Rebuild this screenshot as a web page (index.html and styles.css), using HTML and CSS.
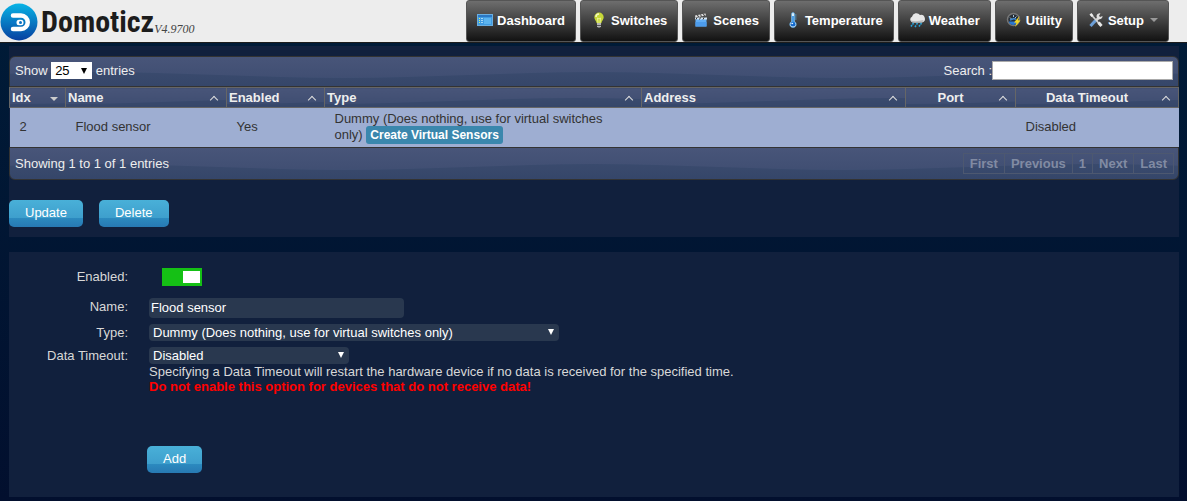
FILE: index.html
```html
<!DOCTYPE html>
<html lang="en">
<head>
    <meta charset="UTF-8">
    <meta name="viewport" content="width=device-width, initial-scale=1.0">
    <title>Domoticz</title>
    <link rel="stylesheet" href="styles.css">
</head>
<body>
    <header class="navbar">
      <a class="brand" href="#">
        <svg class="logo" viewBox="0 0 38 38" width="38" height="38" aria-hidden="true">
          <defs>
            <linearGradient id="logoFill" x1="0" y1="0" x2="0" y2="1">
              <stop offset="0" stop-color="#08b4e6"/>
              <stop offset="1" stop-color="#0740a0"/>
            </linearGradient>
          </defs>
          <circle cx="19" cy="19" r="18.500" fill="url(#logoFill)"/>
          <path d="M13 12.500h8a6.500 6.500 0 0 1 0 13.500H13" fill="none" stroke="#fff" stroke-width="4.500" stroke-linecap="round"/>
          <path d="M11 19.300h5" fill="none" stroke="#0b78c8" stroke-width="3"/>
          <rect x="16.500" y="16.800" width="7" height="5.400" rx="2.500" fill="#fff"/>
          <circle cx="20.500" cy="19.500" r="1.500" fill="#0b6fc0"/>
        </svg>
        <span class="brand-name">Domoticz</span>
        <span class="version">V4.9700</span>
      </a>
      <nav class="menu">
        <a href="#dashboard">
          <svg viewBox="0 0 16 16" width="16" height="16" aria-hidden="true">
            <rect x="0.500" y="2.500" width="15" height="11" fill="#3f9be2" stroke="#6aaee0"/>
            <path d="M1 3h14v2H1z" fill="#2b78c4"/>
            <path d="M2 6h1v1H2zM2 8h1v1H2zM2 10h1v1H2z" fill="#d9f06a"/>
            <path d="M4 6.500h2M4 8.500h2M4 10.500h2" stroke="#a5d6f5"/>
            <path d="M7 6h7v6H7z" fill="#5cb4ef"/>
          </svg>
          Dashboard
        </a>
        <a href="#switches">
          <svg viewBox="0 0 16 16" width="16" height="16" aria-hidden="true">
            <path d="M8 0.500a4.700 4.700 0 0 1 4.700 4.700c0 2.400-2 3.300-2.400 6H5.700c-.4-2.700-2.400-3.600-2.400-6A4.700 4.700 0 0 1 8 .5z" fill="#c6d838"/>
            <path d="M5 5a3 3 0 0 1 3-3" fill="none" stroke="#f5fac0" stroke-width="1.500"/>
            <path d="M7 11l-.5-5L8 7l1.500-1L9 11" fill="none" stroke="#f4f6a8" stroke-width=".8"/>
            <path d="M6 11h4v3.500L9 15.500H7L6 14.500z" fill="#b5b5b5"/>
            <path d="M6 13.500h4" stroke="#555"/>
          </svg>
          Switches
        </a>
        <a href="#scenes">
          <svg viewBox="0 0 16 16" width="16" height="16" aria-hidden="true">
            <path d="M2.500 6h11v8.500h-11z" fill="#62aef5"/>
            <path d="M2.500 10h11v4.500h-11z" fill="#4d9cec"/>
            <path d="M2 5.500h12v2H2z" fill="#d8e6f2"/>
            <path d="M2 3.500L12.500 1.500l.4 2L2.400 5.500z" fill="#e4e4e4"/>
            <path d="M4.500 3l1 2M7.500 2.500l1 2M10.500 2l1 2M4 5.500l-1 2M7.500 5.500l-1 2M11 5.500l-1 2" stroke="#333"/>
          </svg>
          Scenes
        </a>
        <a href="#temperature">
          <svg viewBox="0 0 16 16" width="16" height="16" aria-hidden="true">
            <path d="M6.500 2a1.500 1.500 0 0 1 3 0v7.500a3.200 3.200 0 1 1-3 0z" fill="#d8eefc" stroke="#5ba8df" stroke-width=".7"/>
            <circle cx="8" cy="12.200" r="2.400" fill="#1266c9"/>
            <path d="M8 4v8" stroke="#1c82df" stroke-width="1.500"/>
            <path d="M9.500 3h2M9.500 5h2M9.500 7h2" stroke="#579dce"/>
            <circle cx="7.200" cy="11.500" r=".8" fill="#fff"/>
          </svg>
          Temperature
        </a>
        <a href="#weather">
          <svg viewBox="0 0 16 16" width="16" height="16" aria-hidden="true">
            <path d="M4 10.500A3 3 0 0 1 3 4.800 4.500 4.500 0 0 1 11 3a3.800 3.800 0 0 1 2 7.500z" fill="#e6e6e6"/>
            <path d="M1.500 8.500q6 1.500 13-.5a3 3 0 0 1-2 2.500H4a3 3 0 0 1-2.500-2z" fill="#bcbcbc"/>
            <path d="M4.500 11l-1 1.500M8.500 11l-1 1.500M12.500 11l-1 1.500M3 13l-1 1.500M7 13.500L6 15M11 13l-1 1.500" stroke="#28a5dc" stroke-width="1.500"/>
          </svg>
          Weather
        </a>
        <a href="#utility">
          <svg viewBox="0 0 16 16" width="16" height="16" aria-hidden="true">
            <circle cx="7.500" cy="7.500" r="6" fill="#272e36" stroke="#777" stroke-width="1.500"/>
            <path d="M3 9.500h9a5 5 0 0 1-9 1z" fill="#2a79d2"/>
            <path d="M4 5.500l2 2M7.500 3v2M10.500 4.500L9 6" stroke="#a7c3d8"/>
            <path d="M4 8l4-1.500 2 1" fill="none" stroke="#3c88d0" stroke-width="1.500"/>
            <path d="M13.500 4L8 10.500l2.500.2L9 15l5.500-6.500-2.500-.3z" fill="#f5d824"/>
          </svg>
          Utility
        </a>
        <a href="#setup">
          <svg viewBox="0 0 16 16" width="16" height="16" aria-hidden="true">
            <path d="M3 2.500l8.500 9.500" stroke="#d2d2d2" stroke-width="1.800"/>
            <path d="M10.500 10.500l3 3.500" stroke="#e8e8e8" stroke-width="3"/>
            <path d="M1.500 2.500L3.500 1l2 2.500L3.500 5z" fill="#ededed"/>
            <path d="M11 5.500L7 9.500" stroke="#d5d5d5" stroke-width="2.500"/>
            <path d="M7.500 8.500L2.500 14" stroke="#6c9fd8" stroke-width="3"/>
            <path d="M12.500 1.500a3 3 0 1 0 2 2.500L12 5l-1-1.200z" fill="#dedede"/>
          </svg>
          Setup
          <span class="caret"></span>
        </a>
      </nav>
    </header>

    <main class="page">
      <section class="panel hardware">
        <div class="wave toolbar">
          <label>Show
            <select class="length">
              <option>10</option>
              <option selected>25</option>
              <option>50</option>
            </select>
            entries</label>
          <label class="search">Search :<input type="search"></label>
        </div>
        <table class="devices">
          <colgroup>
            <col class="c-idx">
            <col class="c-name">
            <col class="c-enabled">
            <col class="c-type">
            <col>
            <col class="c-port">
            <col class="c-timeout">
          </colgroup>
          <thead>
            <tr>
              <th class="sorted">Idx</th>
              <th>Name</th>
              <th>Enabled</th>
              <th>Type</th>
              <th>Address</th>
              <th class="center">Port</th>
              <th class="center">Data Timeout</th>
            </tr>
          </thead>
          <tbody>
            <tr>
              <td>2</td>
              <td>Flood sensor</td>
              <td>Yes</td>
              <td>Dummy (Does nothing, use for virtual switches only) <button type="button" class="label-info">Create Virtual Sensors</button></td>
              <td></td>
              <td></td>
              <td>Disabled</td>
            </tr>
          </tbody>
        </table>
        <div class="wave table-footer">
          <span>Showing 1 to 1 of 1 entries</span>
          <div class="pages">
            <button type="button" disabled>First</button>
            <button type="button" disabled>Previous</button>
            <button type="button" disabled>1</button>
            <button type="button" disabled>Next</button>
            <button type="button" disabled>Last</button>
          </div>
        </div>
        <div class="actions">
          <button type="button" class="btn">Update</button>
          <button type="button" class="btn">Delete</button>
        </div>
      </section>

      <form class="panel details">
        <div class="fields">
          <label for="enabled">Enabled:</label>
          <input type="checkbox" id="enabled" class="toggle" checked>

          <label for="name">Name:</label>
          <input type="text" id="name" class="field name" value="Flood sensor">

          <label for="type">Type:</label>
          <select id="type" class="field type">
            <option>Dummy (Does nothing, use for virtual switches only)</option>
          </select>

          <label for="timeout">Data Timeout:</label>
          <div>
            <select id="timeout" class="field timeout">
              <option>Disabled</option>
            </select>
            <p>Specifying a Data Timeout will restart the hardware device if no data is received for the specified time.</p>
            <p class="warning">Do not enable this option for devices that do not receive data!</p>
          </div>
        </div>
        <button type="button" class="btn add">Add</button>
      </form>
    </main>
</body>
</html>
```
FILE: styles.css
```css
* {
  box-sizing: border-box;
}

html {
  min-height: 100%;
  background: linear-gradient(#001c38, #020f2e);
}

body {
  margin: 0;
  font-family: "Liberation Sans", Arial, sans-serif;
  font-size: 13px;
  line-height: 15px;
  color: #d8d8d8;
}

button,
input,
select {
  font: inherit;
  margin: 0;
}

/* top bar */
.navbar {
  display: flex;
  justify-content: space-between;
  height: 43px;
  padding-right: 18px;
  background: #ededed;
  border-bottom: 1px solid #1c1c1c;
}

.brand {
  display: flex;
  align-items: center;
  color: #1c1c1c;
  text-decoration: none;
}

.logo {
  margin-top: 2px;
}

.brand-name {
  padding-top: 2px;
  margin-left: 3px;
  font-family: "Roboto Condensed", "Open Sans Condensed", "Liberation Sans Narrow", "Liberation Sans", sans-serif;
  font-size: 30px;
  font-weight: bold;
  line-height: 40px;
}

.version {
  padding-top: 17px;
  font-family: "Liberation Serif", serif;
  font-size: 12px;
  font-style: italic;
  color: #444;
}

.menu {
  display: flex;
  gap: 4px;
}

.menu a {
  display: flex;
  align-items: center;
  gap: 4px;
  height: 42px;
  padding: 0 10px 2px;
  border: 1px solid #555;
  border-radius: 3px;
  background: linear-gradient(#6e6e6e, #121212);
  color: #fff;
  font-weight: bold;
  text-decoration: none;
}

.caret {
  margin-left: 2px;
  border: 4px solid transparent;
  border-top-color: #999;
  border-bottom: 0;
}

.page {
  padding: 3px 8px 4px 9px;
}

.panel {
  background: #11203d;
}

/* hardware table */
.hardware {
  padding: 10px 0;
  margin-bottom: 15px;
}

.wave,
.devices th {
  background: url("data:image/svg+xml,%3Csvg xmlns='http://www.w3.org/2000/svg' width='500' height='100'%3E%3Cpath d='M0 56C85 56 165 50 250 50S415 56 500 56V100H0z' fill='%23002040' fill-opacity='.13'/%3E%3C/svg%3E") 0 50% repeat-x, linear-gradient(#485579, #3d4c70);
}

.wave {
  display: flex;
  justify-content: space-between;
  align-items: center;
  border: 1px solid #333;
  color: #eee;
  background-position: 50% 50%, 0 0;
}

.toolbar {
  height: 31px;
  padding: 0 5px 2px;
  border-radius: 6px 6px 0 0;
}

.length {
  appearance: none;
  width: 41px;
  height: 17px;
  padding: 0 4px;
  border: 0;
  background: #fff url("data:image/svg+xml,%3Csvg xmlns='http://www.w3.org/2000/svg' width='6' height='6'%3E%3Cpath d='M0 0h6L3 6z' fill='%23000'/%3E%3C/svg%3E") no-repeat right 5px center;
  color: #000;
}

.search {
  display: flex;
  align-items: center;
}

.search input {
  width: 181px;
  height: 19px;
  border: 1px solid #aaa;
  background: #fff;
}

.devices {
  width: 100%;
  table-layout: fixed;
  border-collapse: collapse;
}

.c-idx { width: 56px; }
.c-name { width: 161px; }
.c-enabled { width: 98px; }
.c-type { width: 317px; }
.c-port { width: 110px; }
.c-timeout { width: 163px; }

.devices th {
  position: relative;
  height: 20px;
  padding: 0 2px;
  border: 1px solid #666;
  color: #eee;
  text-align: left;
}

.devices th.center {
  padding-right: 22px;
  text-align: center;
}

/* sort arrows */
.devices th::after {
  content: "";
  position: absolute;
  right: 9px;
  top: 9px;
  width: 5px;
  height: 5px;
  border: 1px solid #ddd;
  border-width: 1px 0 0 1px;
  transform: rotate(45deg);
}

.devices th.sorted::after {
  right: 7px;
  width: 0;
  height: 0;
  border: 4px solid transparent;
  border-top-color: #ccc;
  border-bottom: 0;
  transform: none;
}

.devices td {
  height: 39px;
  padding: 3px 10px;
  background: #9eaed2;
  color: #333;
  line-height: 16px;
}

.label-info {
  padding: 2px 4px;
  margin: -2px 0;
  border: 0;
  border-radius: 3px;
  background: #3a87ad;
  color: #fff;
  font-size: 12px;
  font-weight: bold;
  line-height: 14px;
}

.table-footer {
  height: 33px;
  padding: 0 4px 0 5px;
  border-radius: 0 0 6px 6px;
}

.pages {
  display: flex;
}

.pages button {
  height: 21px;
  margin-left: -1px;
  padding: 0 6px;
  border: 1px solid #4d5870;
  background: none;
  color: #818ba3;
  font-weight: bold;
}

.actions {
  display: flex;
  gap: 16px;
  margin-top: 20px;
}

.btn {
  height: 27px;
  padding: 0 16px 2px;
  border: 0;
  border-radius: 5px;
  background: linear-gradient(#49b0d8, #3e9fcd 66%, #2c8abf 67%, #2779b3);
  color: #fff;
}

/* hardware details */
.details {
  padding: 16px 0 24px;
}

.fields {
  display: grid;
  grid-template-columns: 119px 1fr;
  column-gap: 21px;
  row-gap: 6px;
}

.fields label {
  padding-top: 1px;
  text-align: right;
}

.toggle {
  appearance: none;
  width: 40px;
  height: 18px;
  margin: 0 0 6px 13px;
  border: 3px solid #15c015;
  border-width: 3px 2px 3px 21px;
  background: #fff;
}

.field {
  display: block;
  max-width: 100%;
  border: 0;
  border-radius: 4px;
  background-color: #29384f;
  color: #fff;
}

.name {
  width: 255px;
  height: 20px;
  padding: 0 2px;
}

select.field {
  appearance: none;
  height: 17px;
  padding: 0 4px;
  background-image: url("data:image/svg+xml,%3Csvg xmlns='http://www.w3.org/2000/svg' width='6' height='6'%3E%3Cpath d='M0 0h6L3 6z' fill='%23fff'/%3E%3C/svg%3E");
  background-repeat: no-repeat;
  background-position: right 5px center;
}

.type {
  width: 410px;
}

.timeout {
  width: 200px;
}

.fields p {
  margin: 0;
}

.fields .warning {
  color: #f00;
  font-weight: bold;
}

.add {
  margin: 52px 0 0 138px;
}
```
